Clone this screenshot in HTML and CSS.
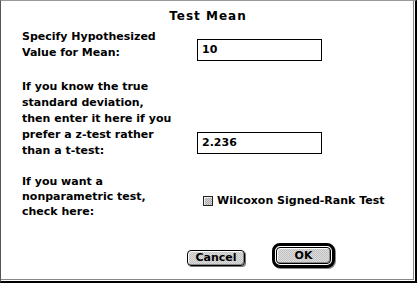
FILE: index.html
```html
<!DOCTYPE html>
<html>
<head>
<meta charset="utf-8">
<link rel="stylesheet" href="styles.css">
</head>
<body>
<div class="window">
  <div class="title">Test Mean</div>
  <div class="row row-mean">
    <div class="label">Specify Hypothesized<br>Value for Mean:</div>
    <div class="field field-mean">10</div>
  </div>
  <div class="row row-sd">
    <div class="label">If you know the true<br>standard deviation,<br>then enter it here if you<br>prefer a z-test rather<br>than a t-test:</div>
    <div class="field field-sd">2.236</div>
  </div>
  <div class="row row-np">
    <div class="label label-np">If you want a<br>nonparametric test,<br>check here:</div>
    <div class="check-row">
      <span class="checkbox"></span>
      <span class="check-label">Wilcoxon Signed-Rank Test</span>
    </div>
  </div>
  <div class="buttons">
    <div class="btn btn-cancel">Cancel</div>
    <div class="default-ring"><div class="btn btn-ok">OK</div></div>
  </div>
</div>
</body>
</html>
```
FILE: styles.css
```css
html, body {
  margin: 0;
  padding: 0;
  background: #fff;
}
.window {
  box-sizing: border-box;
  width: 417px;
  height: 283px;
  border-left: 1px solid #555;
  border-top: 1px solid #999;
  border-right: 2px solid #000;
  border-bottom: 2px solid #000;
  box-shadow: inset -1px -1px 0 #fff, inset -2px -2px 0 #888;
  padding: 7px 0 0 21px;
  font-family: "DejaVu Sans", sans-serif;
  font-weight: bold;
  font-size: 11px;
  line-height: 16px;
  color: #000;
  overflow: hidden;
}
.title {
  margin-left: -21px;
  text-align: center;
  font-size: 12px;
  letter-spacing: 1px;
  line-height: 16px;
}
.row {
  display: flex;
  align-items: flex-start;
}
.label {
  width: 175px;
  white-space: nowrap;
}
.row-mean { margin-top: 5px; }
.row-sd { margin-top: 18px; }
.row-np { margin-top: 15px; }
.label-np { line-height: 15px; }
.field {
  box-sizing: border-box;
  width: 125px;
  height: 22px;
  border: 1px solid #000;
  padding: 2px 0 0 4px;
  line-height: 16px;
  background: #fff;
}
.field-mean { margin-top: 10px; }
.field-sd { margin-top: 53px; }
.check-row {
  display: flex;
  align-items: center;
  margin-top: 19px;
  margin-left: 6px;
  gap: 4px;
}
.checkbox {
  box-sizing: border-box;
  width: 10px;
  height: 10px;
  border: 1px solid #222;
  background: repeating-conic-gradient(#a8a8a8 0 25%, #d6d6d6 0 50%) 0 0 / 2px 2px;
  box-shadow: inset 1px 1px 0 #eee;
}
.check-label { white-space: nowrap; }
.buttons {
  display: flex;
  align-items: flex-start;
  margin-top: 24px;
}
.btn {
  box-sizing: border-box;
  border: 1px solid #000;
  border-radius: 4px;
  background: repeating-conic-gradient(#c2c2c2 0 25%, #dcdcdc 0 50%) 0 0 / 2px 2px;
  text-align: center;
  line-height: 14px;
}
.btn-cancel {
  width: 58px;
  height: 16px;
  margin-top: 7px;
  margin-left: 165px;
  box-shadow: 1px 1px 0 #777, inset 1px 1px 0 #fff, inset -1px -1px 0 #888;
}
.default-ring {
  box-sizing: border-box;
  margin-left: 27px;
  width: 63px;
  height: 25px;
  border: 3px solid #000;
  border-radius: 8px;
  padding: 1px;
  background: #fff;
  box-shadow: 1px 1px 0 #888;
}
.btn-ok {
  width: 55px;
  height: 17px;
  line-height: 15px;
  box-shadow: inset 1px 1px 0 #fff, inset -1px -1px 0 #888;
}
```
